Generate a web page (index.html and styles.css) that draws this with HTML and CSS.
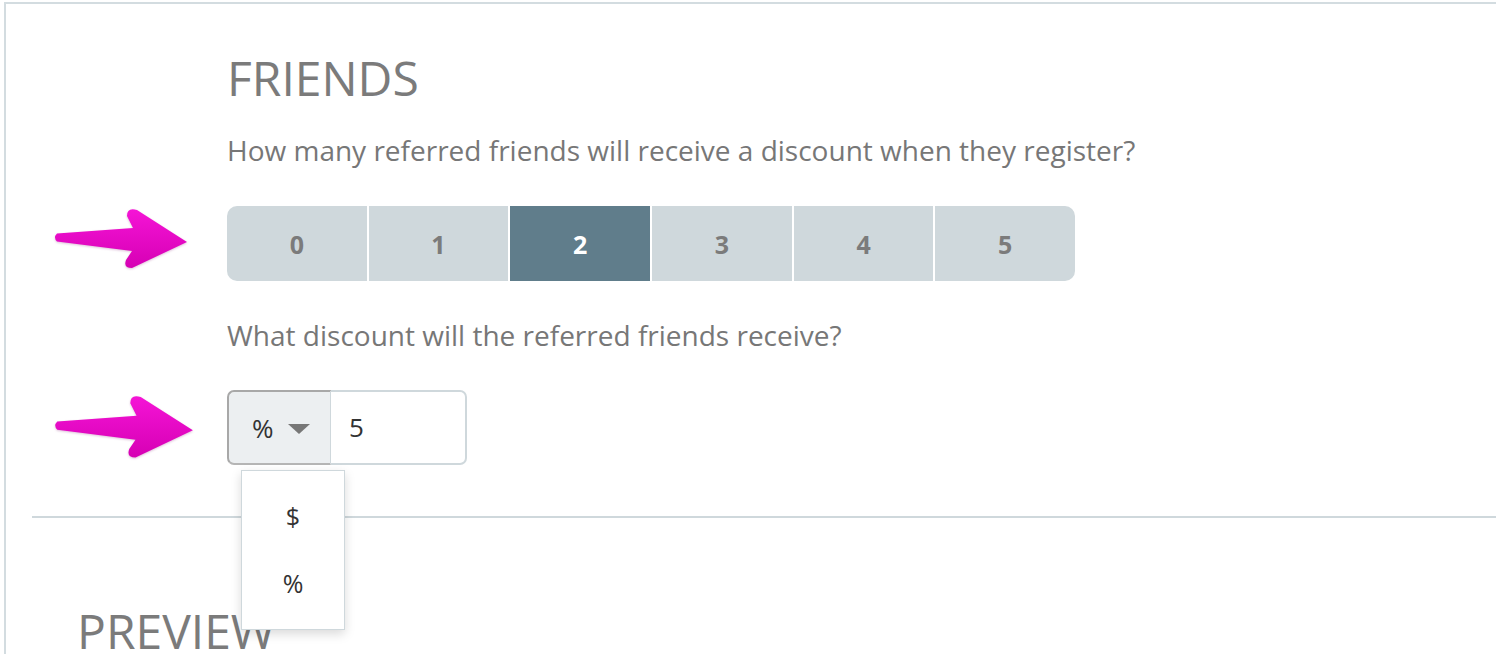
FILE: index.html
```html
<!DOCTYPE html>
<html>
<head>
<meta charset="utf-8">
<link rel="stylesheet" href="styles.css">
</head>
<body>
<div class="frame">
  <section class="friends">
    <h2 class="title">FRIENDS</h2>
    <p class="question">How many referred friends will receive a discount when they register?</p>
    <div class="segments">
      <button class="seg">0</button>
      <button class="seg">1</button>
      <button class="seg active">2</button>
      <button class="seg">3</button>
      <button class="seg">4</button>
      <button class="seg">5</button>
    </div>
    <p class="question q2">What discount will the referred friends receive?</p>
    <div class="input-group">
      <button class="unit-btn"><span>%</span><span class="caret"></span></button>
      <div class="value">5</div>
      <ul class="menu">
        <li>$</li>
        <li>%</li>
      </ul>
    </div>
  </section>
  <hr class="divider">
  <section class="preview">
    <h2 class="title">PREVIEW</h2>
  </section>

  <svg class="arrow arrow-1" viewBox="0 0 140 70" width="140" height="70">
    <defs>
      <linearGradient id="pk" x1="0" y1="0" x2="0" y2="1">
        <stop offset="0" stop-color="#f514d6"/>
        <stop offset="1" stop-color="#d600b4"/>
      </linearGradient>
    </defs>
    <path d="M7,33.5 Q3,37.5 7,41.5 L82,51 L76,60 Q73,68 82,68 L137,42 L87,10 Q77,7 77,16 L83,28 Z" fill="url(#pk)"/>
  </svg>
  <svg class="arrow arrow-2" viewBox="0 0 140 70" width="146" height="76">
    <defs>
      <linearGradient id="pk2" x1="0" y1="0" x2="0" y2="1">
        <stop offset="0" stop-color="#f514d6"/>
        <stop offset="1" stop-color="#d600b4"/>
      </linearGradient>
    </defs>
    <path d="M7,33.5 Q3,37.5 7,41.5 L82,51 L76,60 Q73,68 82,68 L137,42 L87,10 Q77,7 77,16 L83,28 Z" fill="url(#pk2)"/>
  </svg>
</div>
</body>
</html>
```

FILE: styles.css
```css
* { box-sizing: border-box; }
html, body {
  margin: 0;
  padding: 0;
  background: #fff;
  overflow: hidden;
  height: 654px;
}
body {
  font-family: "Open Sans", "Liberation Sans", sans-serif;
}
.frame {
  position: relative;
  margin: 2px 0 0 4px;
  border-top: 2px solid #d3dce0;
  border-left: 2px solid #d3dce0;
  height: 700px;
}
.friends {
  padding: 46px 0 0 221px;
}
.title {
  margin: 0;
  font-size: 48px;
  line-height: 56px;
  font-weight: 400;
  color: #7b7b7b;
}
.question {
  margin: 26px 0 0;
  font-size: 28px;
  line-height: 36px;
  color: #777;
}
.segments {
  margin-top: 38px;
  display: flex;
  gap: 2px;
  width: 848px;
  height: 75px;
  border-radius: 10px;
  overflow: hidden;
}
.seg {
  flex: 1;
  border: 0;
  background: #cfd8dc;
  color: #7b7b7b;
  font-family: inherit;
  font-weight: 700;
  font-size: 25px;
  padding: 0;
}
.seg.active {
  background: #607d8b;
  color: #fff;
}
.q2 { margin-top: 36px; }
.input-group {
  position: relative;
  margin-top: 37px;
  display: flex;
  width: 240px;
  height: 75px;
}
.unit-btn {
  width: 104px;
  height: 75px;
  display: flex;
  align-items: center;
  gap: 14px;
  padding: 0 0 0 23px;
  background: #eceff1;
  border: 2px solid #a8a8a8;
  border-right: 1px solid #cfd8dc;
  border-bottom-color: #b5b5b5;
  border-radius: 7px 0 0 7px;
  font-family: inherit;
  font-size: 26px;
  color: #333;
}
.caret {
  width: 0;
  height: 0;
  border-left: 11px solid transparent;
  border-right: 11px solid transparent;
  border-top: 10px solid #777;
  margin-top: 2px;
}
.value {
  flex: 1;
  border: 2px solid #cfd8dc;
  border-left: 0;
  border-radius: 0 7px 7px 0;
  padding-left: 18px;
  font-size: 26px;
  line-height: 71px;
  color: #333;
}
.menu {
  position: absolute;
  left: 14px;
  top: 80px;
  width: 104px;
  margin: 0;
  padding: 12px 0;
  list-style: none;
  background: #fff;
  border: 1px solid #cfd8dc;
  box-shadow: 0 4px 10px rgba(0,0,0,0.15);
  z-index: 5;
}
.menu li {
  height: 67px;
  line-height: 67px;
  text-align: center;
  font-size: 25px;
  color: #333;
}
.divider {
  margin: 51px 0 0 26px;
  border: 0;
  height: 2px;
  background: #cfd8dc;
}
.preview {
  padding: 85px 0 0 71px;
}
.arrow {
  position: absolute;
  filter: drop-shadow(0 1px 1px rgba(120,0,100,0.25));
}
.arrow-1 { left: 44px; top: 196px; }
.arrow-2 { left: 44px; top: 381px; }
```
